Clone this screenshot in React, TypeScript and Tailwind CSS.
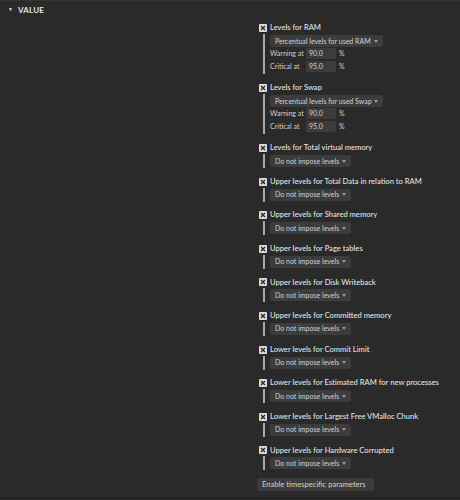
import type { ReactNode } from "react";

type Block = {
  title: string;
  select: string;
  width: string;
  levels?: boolean;
};

const blocks: Block[] = [
  { title: "Levels for RAM", select: "Percentual levels for used RAM", width: "w-[113px]", levels: true },
  { title: "Levels for Swap", select: "Percentual levels for used Swap", width: "w-[113px]", levels: true },
  { title: "Levels for Total virtual memory", select: "Do not impose levels", width: "w-[81px]" },
  { title: "Upper levels for Total Data in relation to RAM", select: "Do not impose levels", width: "w-[81px]" },
  { title: "Upper levels for Shared memory", select: "Do not impose levels", width: "w-[81px]" },
  { title: "Upper levels for Page tables", select: "Do not impose levels", width: "w-[81px]" },
  { title: "Upper levels for Disk Writeback", select: "Do not impose levels", width: "w-[81px]" },
  { title: "Upper levels for Committed memory", select: "Do not impose levels", width: "w-[81px]" },
  { title: "Lower levels for Commit Limit", select: "Do not impose levels", width: "w-[81px]" },
  { title: "Lower levels for Estimated RAM for new processes", select: "Do not impose levels", width: "w-[81px]" },
  { title: "Lower levels for Largest Free VMalloc Chunk", select: "Do not impose levels", width: "w-[81px]" },
  { title: "Upper levels for Hardware Corrupted", select: "Do not impose levels", width: "w-[81px]" },
];

function CheckBox() {
  return (
    <svg width="8" height="8" viewBox="0 0 8 8" className="shrink-0">
      <rect x="0" y="0" width="8" height="8" rx="1" fill="#dcdcdc" />
      <path d="M2 2 L6 6 M6 2 L2 6" stroke="#2a2a2a" strokeWidth="1.4" />
    </svg>
  );
}

function Select({ label, width }: { label: string; width: string }) {
  return (
    <div
      className={`flex h-[12px] ${width} items-center justify-between whitespace-nowrap rounded-[2px] bg-[#3c3c3c] pl-[5px] pr-[5px] text-[7px] text-[#d2d2d2]`}
    >
      <span>{label}</span>
      <svg width="4" height="3" viewBox="0 0 4 3" className="shrink-0">
        <path d="M0 0 H4 L2 3 Z" fill="#9a9a9a" />
      </svg>
    </div>
  );
}

function LevelRow({ label, value }: { label: string; value: string }) {
  return (
    <div className="flex h-[13px] items-center whitespace-nowrap text-[7px]">
      <span className="w-[36px] text-[#d2d2d2]">{label}</span>
      <span className="flex h-[11px] w-[30px] items-center rounded-[1px] bg-[#3c3c3c] pl-[3px] text-[#d2d2d2]">
        {value}
      </span>
      <span className="ml-[3px] text-[#d2d2d2]">%</span>
    </div>
  );
}

function Content({ children }: { children: ReactNode }) {
  return (
    <div className="ml-[4px] border-l-2 border-[#a8a8a8] py-[1px] pl-[5px]">{children}</div>
  );
}

export default function App() {
  return (
    <div className="h-[500px] w-[460px] border-t border-[#353535] bg-[#2a2a2a] font-['Lato','Liberation_Sans',sans-serif] text-[7.6px] leading-none">
      <div className="flex h-[17px] items-center pl-[8px]">
        <span className="text-[5px] text-[#e0e0e0]">▼</span>
        <span className="ml-[5px] text-[8px] font-bold tracking-[0.2px] text-[#e6e6e6]">VALUE</span>
      </div>
      <div className="grid grid-cols-[259px_1fr] pt-[4px]">
        <div />
        <div className="flex flex-col">
          {blocks.map((block) => (
            <div key={block.title} className={block.levels ? "mb-[8px]" : "mb-[7.6px]"}>
              <div className="flex h-[12px] items-center gap-[3px] whitespace-nowrap">
                <CheckBox />
                <span className="font-medium text-[#e2e2e2]">{block.title}</span>
              </div>
              <Content>
                <Select label={block.select} width={block.width} />
                {block.levels ? (
                  <>
                    <LevelRow label="Warning at" value="90.0" />
                    <LevelRow label="Critical at" value="95.0" />
                  </>
                ) : null}
              </Content>
            </div>
          ))}
          <div className="-ml-[2px]">
            <span className="inline-flex h-[13px] w-[117px] items-center whitespace-nowrap rounded-[2px] bg-[#3c3c3c] pl-[5px] text-[#d2d2d2]">
              Enable timespecific parameters
            </span>
          </div>
        </div>
      </div>
      <div className="mt-[7px] border-t border-[#1c1c1c]" />
    </div>
  );
}
